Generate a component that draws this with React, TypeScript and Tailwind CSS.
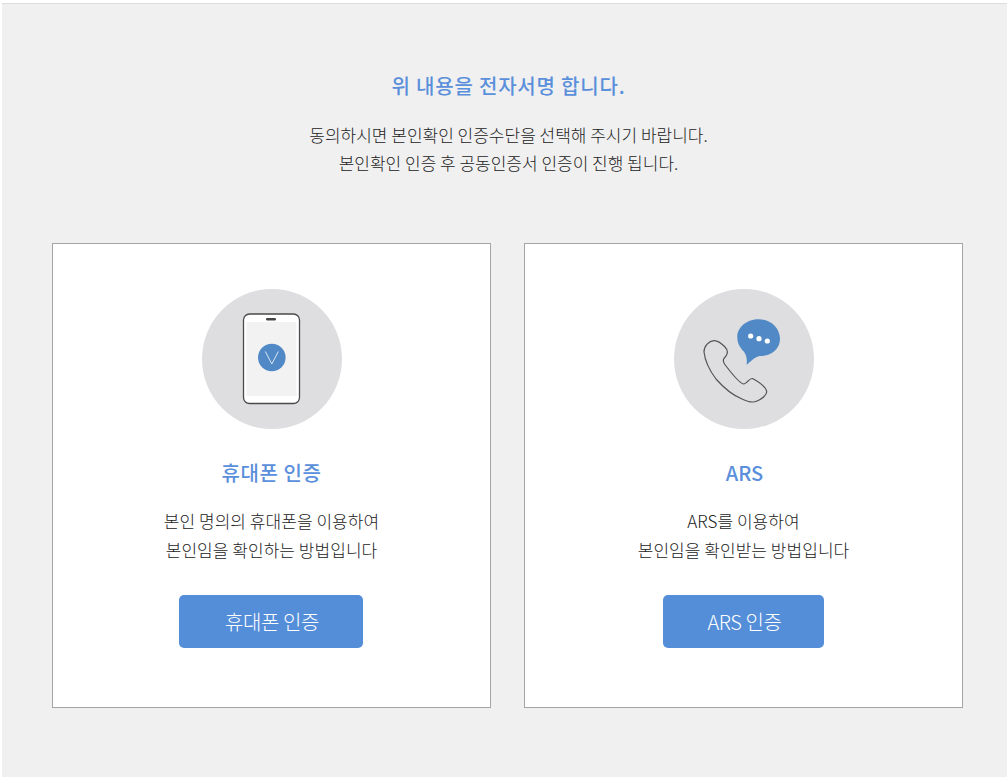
const fontStack = "font-['Noto_Sans_CJK_KR','Noto_Sans',sans-serif]";

function PhoneIcon() {
  return (
    <svg viewBox="0 0 140 140" className="h-[140px] w-[140px]">
      <circle cx="70" cy="70" r="70" fill="#dedee0" />
      <rect x="41.500" y="25" width="56" height="89.500" rx="6" fill="#fff" stroke="#4a4a4a" strokeWidth="1.300" />
      <rect x="44.500" y="33" width="50" height="74" fill="#f2f2f2" />
      <rect x="64" y="29" width="10" height="2.500" rx="1.200" fill="#444" />
      <circle cx="69.800" cy="68.500" r="13.800" fill="#5189c6" />
      <path d="M63.300 62.500 L69.800 75 L76.300 62.500" fill="none" stroke="#d9e6f3" strokeWidth="1" />
    </svg>
  );
}

function CallIcon() {
  return (
    <svg viewBox="0 0 140 140" className="h-[140px] w-[140px]">
      <circle cx="70" cy="70" r="70" fill="#dedee0" />
      <path
        d="M40 51.700 C35 52 30 57 30 63 C31 72 36 82 42 90 C49 98 58 106 68 110 C74 113 79 114 83 112 C88 110 93 106 92.700 102.500 C92 98 85 93 78.500 89.500 C75 89 74 94 70 95 C66 95 55 81 50.500 75 C48 71 50 69 52 67 C54 64 54 61 51 58 C47 54 44 51.500 40 51.700 Z"
        fill="none"
        stroke="#555"
        strokeWidth="1.200"
      />
      <path
        d="M85 30.300 C97 30.300 106 39 106 50 C106 60 97 67 87 67 C83 67 80 69 72.700 76 C73 71 73 67 70 62.700 C65 58 63.300 53 63.300 48 C63.300 38 73 30.300 85 30.300 Z"
        fill="#5189c6"
      />
      <circle cx="76.700" cy="47" r="2.600" fill="#fff" />
      <circle cx="85" cy="49.700" r="2.600" fill="#fff" />
      <circle cx="93.300" cy="52" r="2.600" fill="#fff" />
    </svg>
  );
}

interface AuthCardProps {
  icon: React.ReactNode;
  title: string;
  titleClass: string;
  lines: string[];
  button: string;
  buttonClass: string;
}

function AuthCard({ icon, title, titleClass, lines, button, buttonClass }: AuthCardProps) {
  return (
    <div className="flex h-[465px] w-[439px] flex-col items-center border border-[#a5a5a5] bg-white pt-[45px]">
      {icon}
      <h3 className={`mt-[29px] h-[30px] text-[20px] leading-[30px] font-medium text-[#5a8fdb] ${titleClass}`}>{title}</h3>
      <div className="mt-[18px] text-center text-[17px] leading-[29px] font-light tracking-[0.05px] text-[#222]">
        {lines.map((line) => (
          <p key={line}>{line}</p>
        ))}
      </div>
      <button className={`mt-[31px] h-[53px] rounded-[5px] bg-[#548ed9] pl-[2px] text-[20px] font-light tracking-[-0.4px] text-white ${buttonClass}`}>
        {button}
      </button>
    </div>
  );
}

export default function App() {
  return (
    <div className={`h-[777px] w-full overflow-hidden bg-white pt-[3px] pl-[2px] ${fontStack}`}>
      <div className="h-full border-t border-[#dcdcdc] bg-[#f0f0f0] pt-[68px]">
        <div className="pl-[8px] text-center">
          <h2 className="text-[20px] leading-[27px] font-medium tracking-[0.8px] text-[#5a8fdb]">위 내용을 전자서명 합니다.</h2>
          <div className="mt-[22px] text-[17px] leading-[28px] font-light text-[#222]">
            <p>동의하시면 본인확인 인증수단을 선택해 주시기 바랍니다.</p>
            <p>본인확인 인증 후 공동인증서 인증이 진행 됩니다.</p>
          </div>
        </div>
        <div className="mt-[66px] flex gap-[33px] pl-[50px]">
          <AuthCard
            icon={<PhoneIcon />}
            title="휴대폰 인증"
            titleClass="tracking-[0.6px]"
            lines={['본인 명의의 휴대폰을 이용하여', '본인임을 확인하는 방법입니다']}
            button="휴대폰 인증"
            buttonClass="mr-[1px] w-[184px]"
          />
          <AuthCard
            icon={<CallIcon />}
            title="ARS"
            titleClass="pl-[2px] tracking-[0px]"
            lines={['ARS를 이용하여', '본인임을 확인받는 방법입니다']}
            button="ARS 인증"
            buttonClass="w-[161px]"
          />
        </div>
      </div>
    </div>
  );
}
